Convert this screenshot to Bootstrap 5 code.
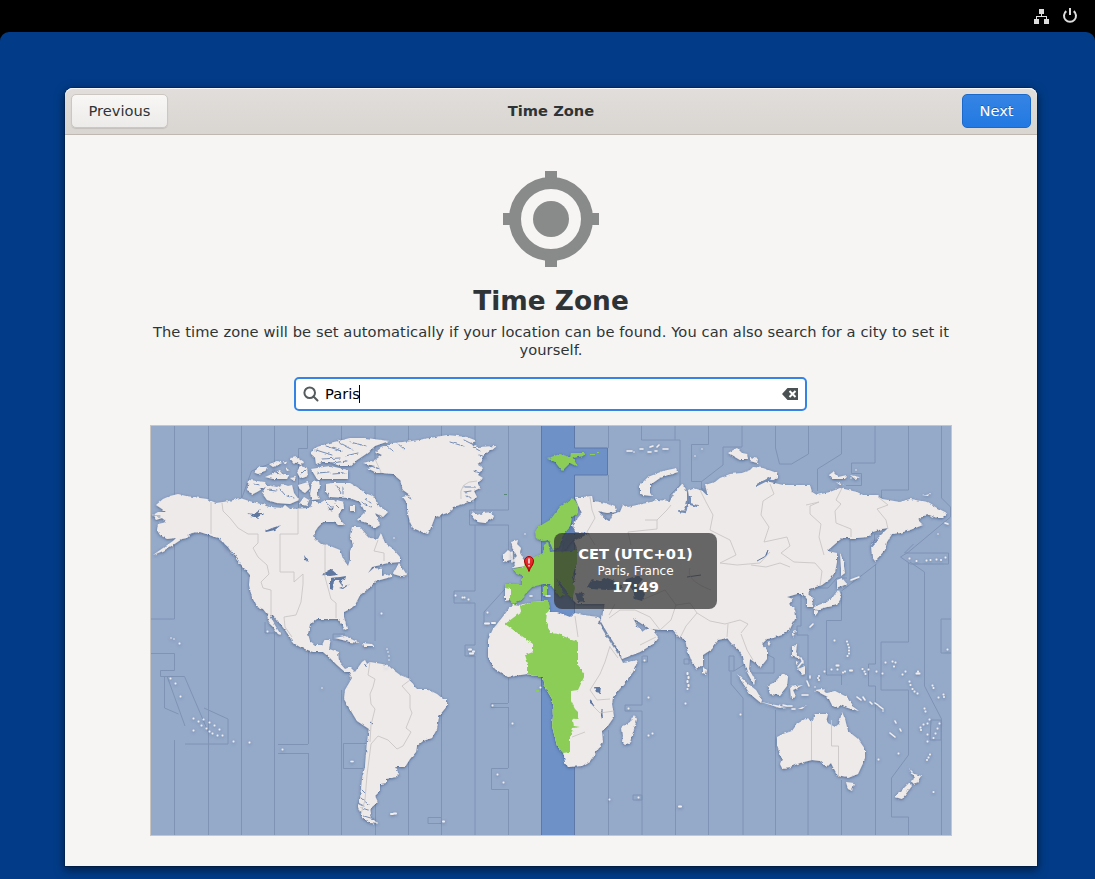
<!DOCTYPE html>
<html lang="en">
<head>
<meta charset="utf-8">
<meta name="viewport" content="width=device-width, initial-scale=1">
<title>Time Zone</title>
<link href="https://cdn.jsdelivr.net/npm/bootstrap@5.3.0/dist/css/bootstrap.min.css" rel="stylesheet">
<style>
body{font-family:"DejaVu Sans",sans-serif;font-size:14.667px;line-height:18px;color:#2e3436;background:#000;height:879px;overflow:hidden}
.topbar{height:32px;padding-right:17px;gap:12px}
.desktop{height:847px;background:#023c88;border-radius:9px 9px 0 0;padding:56px 58px 0 65px}
.window{height:778px;background:#f6f5f4;border-radius:8px 8px 0 0;box-shadow:0 3px 10px 1px rgba(0,0,0,.5),0 0 0 1px rgba(0,0,0,.18)}
.headerbar{height:47px;padding:0 6px;background:linear-gradient(#e1dedb,#d9d5d1);border-bottom:1px solid #bfb8b1;border-radius:8px 8px 0 0;box-shadow:inset 0 1px #f8f7f7}
.headerbar .btn{height:34px;font-size:14.667px;line-height:18px;border-radius:5px;padding:0 0 1px}
.btn-prev{width:97px;color:#2e3436;border-color:#cdc7c2;background:linear-gradient(#f8f7f6,#edebe9);box-shadow:0 1px 1px rgba(0,0,0,.1)}
.btn-next{width:69px;color:#fff;border-color:#1b6acb;background:linear-gradient(#3584e4,#2379e2);text-shadow:0 -1px rgba(0,0,0,.3)}
.target{margin-top:36px}
h1{font-size:26.4px;line-height:32px;margin:18px 0 6px}
.intro{width:804px;margin-bottom:18px;letter-spacing:.083px}
.search{width:513px;height:34px;border:2px solid #3584e4;border-radius:5px;background:#fff;padding:0 7px;color:#000;margin:0 1px 14px 0}
.query{margin-left:6px;margin-right:-1px}
.caret{width:1px;height:18px;background:#000}
.map-frame{width:802px;height:411px;border:1px solid #c9c6c1;line-height:0}
.tip{left:403px;top:107px;width:163px;height:76px;border-radius:8px;background:rgba(46,46,46,.7);color:#fff;padding-top:12px}
.tip span{line-height:17px}
.tip small{font-size:12px;line-height:16px;padding-top:1px;margin-bottom:-1px}
.land{fill:#eeeaea}.green{fill:#8bcd56}.sea{fill:#5f78a2}
.zone{fill:none;stroke:#7f93b5;stroke-width:1}
.border-line{fill:none;stroke:#cbc6c6;stroke-width:.9}
.inlet{fill:none;stroke:#758db4;stroke-width:1;stroke-linecap:round}
.isle{fill:none;stroke:#f1eeee;stroke-width:2;stroke-linecap:round}
</style>
</head>
<body>
<header class="topbar d-flex justify-content-end align-items-center">
<svg width="16" height="16" viewBox="0 0 16 16" fill="#dedede"><path d="M5 1h5v5H8v2h5v3h2v5h-5v-5h2V9H3v2h2v5H0v-5h2V8h5V6H5z"/></svg>
<svg width="16" height="16" viewBox="0 0 16 16" fill="none" stroke="#dedede" stroke-width="2"><path d="M4.300 3.100a6 6 0 1 0 7.400 0M8 0v7"/></svg>
</header>
<main class="desktop">
<section class="window d-flex flex-column align-items-center">
<div class="headerbar w-100 d-flex align-items-center justify-content-between position-relative">
<button class="btn btn-prev">Previous</button>
<strong class="position-absolute top-50 start-50 translate-middle">Time Zone</strong>
<button class="btn btn-next">Next</button>
</div>
<svg class="target flex-shrink-0" width="96" height="96" viewBox="0 0 96 96"><g fill="#888b8a"><circle cx="48" cy="48" r="18"/><path d="M42 0h12v12H42zM42 84h12v12H42zM0 42h12v12H0zM84 42h12v12H84z"/></g><circle cx="48" cy="48" r="36" fill="none" stroke="#888b8a" stroke-width="12"/></svg>
<h1 class="fw-bold">Time Zone</h1>
<p class="intro text-center">The time zone will be set automatically if your location can be found. You can also search for a city to set it yourself.</p>
<div class="search d-flex align-items-center">
<svg width="16" height="16" viewBox="0 0 16 16" fill="none" stroke="#555a5c" stroke-width="2"><circle cx="6.700" cy="6.700" r="5.300"/><path d="m10.500 10.500 4 4" stroke-linecap="round"/></svg>
<span class="query">Paris</span><span class="caret"></span>
<svg class="ms-auto" width="16" height="16" viewBox="0 0 16 16"><path fill="#4b5052" d="M5.500 2H16v12H5.500L0 8z"/><path d="m7.500 5 6 6m0-6-6 6" stroke="#fff" stroke-width="2"/></svg>
</div>
<div class="map-frame position-relative">
<svg width="800" height="409" viewBox="151 426 800 409">
<defs>
<filter id="coast" x="-2%" y="-2%" width="104%" height="104%"><feTurbulence type="fractalNoise" baseFrequency=".24" numOctaves="2" seed="4" result="n"/><feDisplacementMap in="SourceGraphic" in2="n" scale="3.200" xChannelSelector="R" yChannelSelector="G" result="d"/><feDropShadow in="d" dx="0" dy="1" stdDeviation="1.800" flood-color="#2c4672" flood-opacity=".65"/></filter>
<filter id="soft" x="-2%" y="-2%" width="104%" height="104%"><feDropShadow dx="0" dy="1" stdDeviation="1.500" flood-color="#2c4672" flood-opacity=".5"/></filter>
<linearGradient id="pin" x2="0" y2="1"><stop stop-color="#f03a3a"/><stop offset="1" stop-color="#cc1010"/></linearGradient>
</defs>
<path fill="#95a9c9" d="M151 426h800v409H151z"/>
<path fill="#6e91c8" stroke="#5e78a8" d="M541.500 425h33v23h33v27h-33v361h-33z"/>
<!-- time zone boundaries at sea -->
<path class="zone" d="M174.500 426v193H151M151 653.500h23.500v17h-14v6h24l24 56M167 676l18 50M164.500 676v32l14 6M185 744h43v-25l-24-11M208.500 426v409M241.500 426v72M241.500 562v273M174.500 740v95M274.500 426v36l-23 9-10 28M274.500 633v202M307.500 426v22.500h-9v60M308.500 650v94M308.500 753v82M341.500 426v40M341.500 690v145M375 426v215M375.500 800v35M408.500 426v409M441.500 426v409M475 426v84M475 525v66h-21v12h21v42h-10v11h10v179M508.500 426v84h-39v15h39v38M508.500 678v25M508.500 707v61M508.500 789v46M505 589l-21 23v12h9M608.500 475v26M608.500 426v22M641.500 426v14h38.500v45l-10 10v8M675 426v14M708.500 426v18.500H691.500v37h10v8M701 482l22-17v-18h19v-21M775.500 426v22l4 16h12l17-10v-28M841.500 426v28l-24 15v22M875 426v37h-23.500v10.500h10v12H846M908.500 426v64H881.500v9M941.500 426v72l9 9v10l-42 35-8 5 10 7h38v-11h-44l9-9M874.500 556v-22h10M850 540v40M875.500 564v100h-7v22h7v149M908.500 563v79h-27.500v48h27.500v65l-17 23v39h17v18M910 562l14.500 10v114l17 33v116M841.500 591l35-27M841.500 592v28.500h-15v54.500h15v10M800 588h28l9-10h10M801 590v36h-4v9h11v50M808 760v75M758 650l16 8v15h-25M642 656v49M642 711v124M642.500 656h5v6h-6M675.500 632v203M684 659h5v5h-5zM708.500 652v183M729 656h5v15l11-7M729 656v15h5M731 672v12l12 14v137M775.500 710v125M841.500 780v55M608.500 730v105M951 619h-10v34h10M931 720h10v20h-11zM642 705h-17v6h17M633 795h9v5h-9zM278 744.500h30M278 753.500h30M367 743.500h-23.500v25H363M508 703.500h-17v4h17M508 768.500h-16.500v21H508M441 817.500h-13v6h13M265 622v11h10M345 634h-12v6h10"/>
<g filter="url(#coast)">
<!-- Americas and Greenland -->
<path class="land" d="M153 515 158 512 166 512 162 509 156 505 163 499 170 496 178 494 186 496 207 499 216 503 230 501 240 498 246 500 256 503 262 504 270 507 282 508 285 505 290 509 310 508 313 501 320 503 325 504 332 512 334 507 337 500 343 502 344 508 340 512 337 517 334 522 323 522 318 527 314 533 315 539 321 544 330 546 340 550 343 559 348 566 350 560 350 551 353 545 350 536 352 527 360 527 365 533 370 538 378 539 381 533 385 543 392 548 400 557 400 562 389 563 372 567 368 573 374 568 382 569 382 576 391 574 391 577 380 580 375 582 368 589 360 595 355 605 350 609 344 612 344 617 347 629 345 630 342 624 338 619 330 619 317 619 310 624 308 634 310 641 315 645 322 645 325 639 331 639 329 649 338 652 339 662 345 669 350 667 355 672 362 662 365 660 367 664 370 662 388 665 392 669 400 675 410 679 413 685 417 689 427 689 437 694 443 699 447 699 447 706 439 716 437 729 432 738 423 741 417 746 416 752 410 759 405 767 395 767 398 772 397 777 386 779 386 783 380 784 380 791 375 796 378 802 372 807 370 816 378 824 370 823 362 817 358 807 360 799 362 779 365 766 367 742 369 729 357 721 348 706 344 699 345 690 352 678 349 672 345 672 337 665 330 658 323 652 313 652 300 647 292 642 290 637 285 630 278 621 273 615 270 615 273 622 281 635 278 634 273 627 269 623 267 614 263 609 257 607 252 597 249 585 250 575 245 569 237 560 228 547 218 538 200 532 192 533 187 538 182 539 173 545 163 551 153 555 163 548 173 541 176 538 167 539 160 535 157 530 158 524 167 522 162 518 156 520z"/>
<path class="land" d="M363 463 375 460 382 455 376 452 382 447 393 443 413 441 430 438 447 435 467 437 477 441 470 443 478 447 497 446 493 449 487 452 482 458 478 465 483 468 478 475 483 478 477 482 480 488 474 491 477 497 473 500 463 504 453 507 450 512 435 517 432 525 428 534 422 532 413 528 410 522 407 510 407 503 403 497 410 495 403 490 400 480 393 474 383 473 375 472 367 468 375 466z"/>
<path class="land" d="M249 480 265 482 267 486 257 492 253 494 247 491zM253 472 260 467 267 467 265 472 258 474zM269 464 278 461 282 463 273 467zM265 477 272 474 280 470 284 475 289 475 287 479 273 479zM262 493 267 485 277 487 283 484 288 486 292 485 294 493 299 500 290 504 277 503 267 500zM290 458 297 457 304 462 302 465 293 462zM297 472 300 466 307 468 308 475 300 478zM298 485 308 482 310 488 305 493 300 490zM312 482 319 481 320 487 317 493 320 499 312 500 310 495zM310 453 317 447 330 443 350 438 365 438 389 441 375 446 366 454 357 460 350 466 340 466 330 462 320 462zM311 469 330 466 348 470 348 479 317 479zM326 484 333 483 350 483 357 487 365 493 375 497 377 505 388 512 383 517 375 513 380 525 375 528 367 523 357 520 365 512 360 502 350 498 330 497 326 492zM333 520 338 514 341 521 345 525 338 525zM350 506h5v5h-5zM315 457 322 462 316 464zM393 574 399 563 407 575 400 576zM335 638 345 636 353 640 360 643 350 642zM362 643 372 644 374 646 363 646zM299 504 304 497 309 500 307 506zM320 503 325 500 334 500 340 506 330 508zM285 467 290 470 287 471zM290 478 296 477 294 481zM283 461 287 462 285 465z"/>
<path class="inlet" d="M316 450 332 455M326 446 342 451M338 442 352 449M350 442 366 446M322 459 340 458M345 456 358 453M332 463 347 461M318 473 330 472M333 474 345 473M268 490 276 491M280 489 285 495M287 496 294 498M337 486 341 493M343 487V494M362 502 371 507M254 484 259 485M371 466 379 469M386 445 393 451M397 443 404 449M450 442 463 446M464 440 474 445M473 447 480 451M479 455 486 457M474 471 480 473M465 487 475 487M464 492 471 491M466 496 471 498M405 495 411 499M195 533 188 535M220 538 228 550M232 551 240 562M153 516 160 516M326 503 331 507M335 504 340 509M365 499 371 503M273 470 280 474M305 470 301 474M361 798 368 804M362 808 371 811M364 816 374 819M358 803 364 806M362 790 365 793"/>
<path class="land" d="M471 515 473 512 477 515 483 513 492 512 494 517 485 523 478 522 475 520zM511 542 518 540 517 544 521 548 520 553 523 558 527 562 526 566 513 568 516 564 513 560 517 556 513 549zM503 555 508 550 512 553 510 560 503 562z"/>
<!-- Africa, Arabia, Asia -->
<path class="land" d="M550 612 557 612 570 617 575 613 583 615 598 617 602 620 603 612 605 604 577 604 573 600 573 590 577 560 577 548 574 541 590 533 575 532 572 525 582 513 578 505 575 497 583 497 592 496 593 501 605 503 615 507 616 512 607 513 598 511 603 516 610 520 613 514 620 512 623 505 628 507 637 505 647 503 657 500 670 501 675 492 682 484 687 492 687 503 682 512 690 503 688 490 693 488 700 490 707 492 705 485 715 482 720 478 730 474 742 473 750 470 753 467 763 468 777 473 777 478 770 482 783 485 798 485 810 485 812 492 817 495 830 492 840 488 857 492 863 495 878 495 882 499 900 502 910 499 927 502 937 508 947 513 943 518 937 518 927 514 918 520 923 525 910 530 900 533 892 534 887 542 885 550 875 561 872 557 871 545 877 539 888 528 882 529 873 532 868 537 857 538 842 538 827 551 837 553 837 562 835 572 830 579 822 585 810 589 808 594 813 599 812 607 807 607 807 599 803 594 797 594 787 597 793 599 789 604 795 609 796 617 790 629 782 635 773 638 767 639 762 644 767 650 767 659 760 668 757 664 750 659 749 669 755 680 754 685 747 672 743 657 738 649 732 644 727 638 718 640 712 649 703 655 703 664 697 669 692 662 687 649 685 639 680 638 673 630 660 630 652 629 642 624 633 618 637 626 643 632 650 627 658 637 653 644 640 652 622 659 618 649 608 634 600 620 598 622 610 642 620 657 623 663 638 660 633 672 623 685 613 697 612 704 614 717 607 727 602 732 603 742 597 751 590 761 582 766 568 767 565 762 563 752 557 746 552 726 553 716 552 699 545 687 543 677 537 677 527 674 508 677 495 669 488 657 488 640 493 629 505 614 512 604 520 605 532 602 547 601 547 607z"/>
<path class="land" d="M505 585 510 586 510 600 505 601zM640 493 640 485 648 477 663 471 677 468 678 472 660 478 650 485 650 493 652 496 643 495zM728 453 737 448 742 453 747 454 748 460 740 460zM750 457 758 459 757 463 750 461zM829 475 833 472 838 477 847 475 845 479 832 479zM850 475 859 477 855 479zM836 482 844 485 840 485zM922 495 930 493 928 496zM840 553 843 560 845 573 841 576 841 568zM837 580 842 578 847 584 837 588zM838 590 841 598 837 605 827 607 817 610 813 607 827 602 833 597zM815 610 819 611 815 616zM793 631 796 630 793 638zM767 643 771 642 769 646zM792 646 797 645 796 652 801 659 792 656zM798 669 805 666 805 674 802 675zM796 661 799 662 797 665zM767 686 775 682 783 673 788 677 787 686 780 695 770 694zM737 674 747 683 756 690 762 700 761 703 750 694zM758 701 770 704 787 707 780 708zM790 687 803 685 793 690 796 697 791 698zM798 709 807 705 802 709zM815 690 822 689 826 693 835 691 847 697 852 706 859 711 848 708 840 705 838 708 832 705 828 697 822 694zM777 737 783 734 792 731 797 724 805 719 813 721 815 714 828 714 826 722 835 727 839 724 842 712 845 719 848 731 858 739 865 749 865 759 858 774 848 778 838 776 833 767 831 763 827 767 820 761 812 760 800 763 790 767 782 768 780 764 782 759 777 746zM846 782 854 783 852 791 848 789zM909 768 915 774 921 776 915 785 912 782 914 777zM909 783 912 786 902 799 895 797 903 789zM634 715 637 719 630 742 625 745 622 742 623 736 622 727 630 722zM703 667 706 670 705 674 703 673z"/>
<!-- Arctic bays and the Ob gulf -->
<path class="inlet" style="stroke-width:2" d="M688 500 685 512 679 511M690 498 690 504 697 506M702 489 707 494M757 485 771 478M604 517 609 520M769 481 775 481M877 540 872 546"/>
<!-- zones on Central European Time -->
<path class="green" d="M521 612 520 606 532 602 548 601 550 607 547 612 546 622 550 633 558 634 578 642 578 665 585 675 578 690 571 691 571 701 575 709 578 712 578 717 573 721 574 726 580 727 573 728 570 737 570 752 563 753 557 746 552 726 553 716 552 699 545 687 543 677 537 677 528 674 528 664 525 655 533 652 533 644 505 624z"/>
<path class="green" d="M514 569 523 567 532 558 543 553 544 545 548 542 550 552 577 551 577 562 572 577 575 588 572 600 566 590 556 578 564 594 560 597 550 584 543 584 532 587 525 594 522 600 513 604 510 600 510 589 505 588 505 584 522 584 522 575 514 572zM535 532 538 527 550 520 560 507 573 498 578 505 578 513 572 517 570 527 563 535 559 547 553 550 549 540 542 541 536 538zM548 458 560 454 570 457 571 453 585 453 583 456 573 458 578 467 570 463 562 471 555 462zM543 586h4v10h-4z"/>
<path fill="#6682b5" d="M587 587 592 579 600 581 605 577 617 582 623 589 608 590 590 589zM626 579 637 576 643 579 638 585 645 594 642 601 635 599 633 590 627 584zM575 592 583 593 585 602 578 603zM578 518 573 524 575 534 590 533 575 538 562 553 565 540z"/>
<!-- lakes -->
<path class="sea" d="M247 513 254 514 261 509 258 513 263 513 257 518 250 517 254 516zM265 531 272 528 281 525 275 530 266 532zM321 575 327 571 331 569 338 575 330 576zM330 578 340 577 346 576 345 580 341 579 342 586 338 580 334 580 333 589 330 588zM339 588 350 584 343 589zM304 555 309 562 305 560zM594 687 601 687 600 693 596 692zM590 699 594 706 590 703zM601 709 603 719 601 716zM757 560 765 556 768 549 767 555z"/>
</g>
<path fill="none" stroke="#5f78a2" d="M687 577 701 575M364.500 664l2 3M370 722l3 2M757 561 766 556 768 550M590 700 594 706M602 709V718"/>
<!-- zone boundaries on land -->
<path class="border-line" d="M211 502v32M222 503 223 511 230 518 238 528 248 534H258V543L253 548 258 557 267 565 269 574 261 582 263 588 271 590V616M298 508v26h-18v38h14v10l9-8v10l-2 18-5 13-12 2 1 10 7 10M325 544v33l6 22 5 4v15M378 540 374 551 384 553 384 561M370 662 368 675 375 679 373 687 370 694 371 704 375 709 371 725 370 742M410 680 402 686 410 695 410 708 412 713 406 728 411 732 403 746 397 749 388 740 378 736 371 744 367 775 365 800 361 814M375 459 381 472M477 481Q458 481 461 499M590 497 592 510 595 518 587 532 595 545M645 520 657 520 667 510 671 505M657 520V529L628 532 631 545M700 490 706 502 713 515 710 530 730 540 736 555 720 563 737 565 760 563 770 552M770 484 774 494 763 501 761 515 769 527 764 542 787 537 790 546 781 553 794 562 815 563 822 571 820 586M806 505 819 502 810 506 810 514 821 524 819 537 824 555M842 488 836 500 841 504 835 511 836 523 851 529V537M878 497 888 505 877 509 886 520 888 529M642 600 665 590 676 605 671 620 660 630 650 617 635 610 620 610 609 618M676 605 690 603 697 613 710 621 725 624 740 620 748 624 741 633M697 613 686 626 681 636M728 624 727 637M741 634 747 650 753 660M610 647 618 658M610 646 605 662 600 674 590 690 597 700 610 699M578 637 575 616M711 590Q685 580 690 568M609 615 615 604M656 637 640 645M592 705 600 713 614 711M572 737 585 732M811.500 720v40M831.500 720v26h7v31M751 565 766 567 780 563 790 567"/>
<!-- small islands -->
<g filter="url(#soft)">
<path class="isle" d="M170.500 678.500h.01M175.500 683.500h.01M180.500 696.500h.01M179.500 643.500h.01M193.500 718.500h.01M198.500 721.500h.01M203.500 719.500h.01M209.500 722.500h.01M214.500 725.500h.01M219.500 729.500h.01M206.500 728.500h.01M212.500 733.500h.01M217.500 735.500h.01M233.500 741.500h.01M249.500 742.500h.01M222.500 735.500h.01M193.500 730.500h.01M201.500 725.500h.01M209.500 731.500h.01M267.500 631.500h.01M282.500 749.500h.01M381.500 613.500h.01M455.500 595.500h.01M462.500 597.500h.01M464.500 597.500h.01M468.500 599.500h.01M487.500 612.500h.01M485 623.500h4M492 623h3M469 649.500h2M473 651.500h1M470 653.500h3M492.500 705.500h.01M512.500 723.500h.01M497.500 774.500h.01M503.500 782.500h.01M391 814h2M394 813.500h2M443 821.500h1M540.500 687.500h.01M644.500 660.500h.01M687.500 673v1M688.500 677v1M687.500 681v1M688.500 685v1M687.500 689h.01M648.500 697.500h.01M628.500 708.500h.01M685.500 703.500h.01M740.500 714.500h.01M648.500 735.500h.01M652.500 733.500h.01M609.500 799.500h.01M638.500 797.500h.01M679 806.500h2M834.500 640.500h.01M847 641.500h.01M848 644.500h.01M849 647.500h.01M849 650.500h.01M849 653.500h.01M847.500 656h.01M831.500 669.500h.01M836.500 665.500h2M837.500 669.500h.01M824.500 671.500h.01M819 676h.01M819 680h.01M818 678h.01M843 672.500h.01M845 671.500h.01M850 670.500h2M862.500 669h.01M864.500 671.500h.01M865.500 674h.01M868.500 669.500h.01M876.500 671.500h.01M882.500 673.500h.01M885.500 662.500h.01M892.500 661.500h.01M895.500 662.500h.01M894 666.500h.01M902.500 674.500h.01M905.500 671.500h.01M916.500 673.500h3M918 671.500h.01M909.500 681.500h.01M910.500 685h.01M912.500 689h.01M914.500 691.500h.01M917.500 693.500h.01M932.500 685.500h.01M933.500 688h.01M938.500 697.500h.01M943.500 694.500h.01M944 697h.01M947.500 649.500h.01M924.500 708.500h.01M925.500 711.500h.01M920.500 727.500h.01M921 730h.01M923.500 724.500h.01M927.500 723.500h.01M929.500 719.500h.01M927.500 734.500h.01M927.500 741.500h.01M939.500 723.500h.01M937.500 728.500h.01M935.500 733.500h.01M933.500 738h.01M930 754.500h.01M928.500 757.500h.01M927 760h.01M898.500 753.500h.01M933.500 792h.01M878.500 759.500h.01M909.500 558.500h.01M916.500 561h.01M926.500 560.500h.01M930.500 560h.01M936.500 559.500h.01M941 560h.01M945.500 557.500h.01"/>
<path class="isle" style="stroke-width:1.500" d="M171 638h.01M174 639h.01M512 562v-10M525 534h.01M322 688h.01M351 761.500h2M387 649h.01M388 652h.01M389 656h.01M386 667h.01M389 660h.01M627 451h5M634 452h.01M640 449h3M648 452h3M650 447l3-1M657 447l2-2M663 449h5M655 451h2M702 449h.01M695 456h.01M801 658l2 5M803 661l-5 6M807 681l2 5M810 676v2M815 687h.01M802 695h6M857 697l4 3M863 697l2 3M870 702l2 2M875 703l3 2M879 706l4 3M883 711h.01M895 721l1 2M900 729l1 2M890 733l5 4M783 705l4 1M788 706h4M792 709h3M945 523l3 1M851 580l8-3M938 534h.01M851 478h.01M856 470h.01M810 627l3-3M394 538h.01M546 596h4M530 596h2"/>
</g>
<path fill="#8bcd56" d="M536 690h3v2h-3zM590 454h5v1h-5zM597 452h2v1h-2z"/>
<path fill="#3d7b55" opacity=".7" d="M504 494h3v1h-3z"/>
<!-- location marker -->
<path d="M529 571.500c-.8-4-4.500-6-4.500-10.500a4.500 4.500 0 0 1 9 0c0 4.500-3.700 6.500-4.500 10.500z" fill="url(#pin)" stroke="#a40000"/><path d="M529 558.500v5M529 565v1.500" stroke="#fff" stroke-width="1.400"/>
</svg>
<div class="tip position-absolute d-flex flex-column align-items-center"><span class="fw-bold">CET (UTC+01)</span><small>Paris, France</small><span class="fw-bold">17:49</span></div>
</div>
</section>
</main>
<script src="https://cdn.jsdelivr.net/npm/bootstrap@5.3.0/dist/js/bootstrap.bundle.min.js"></script>
</body>
</html>
